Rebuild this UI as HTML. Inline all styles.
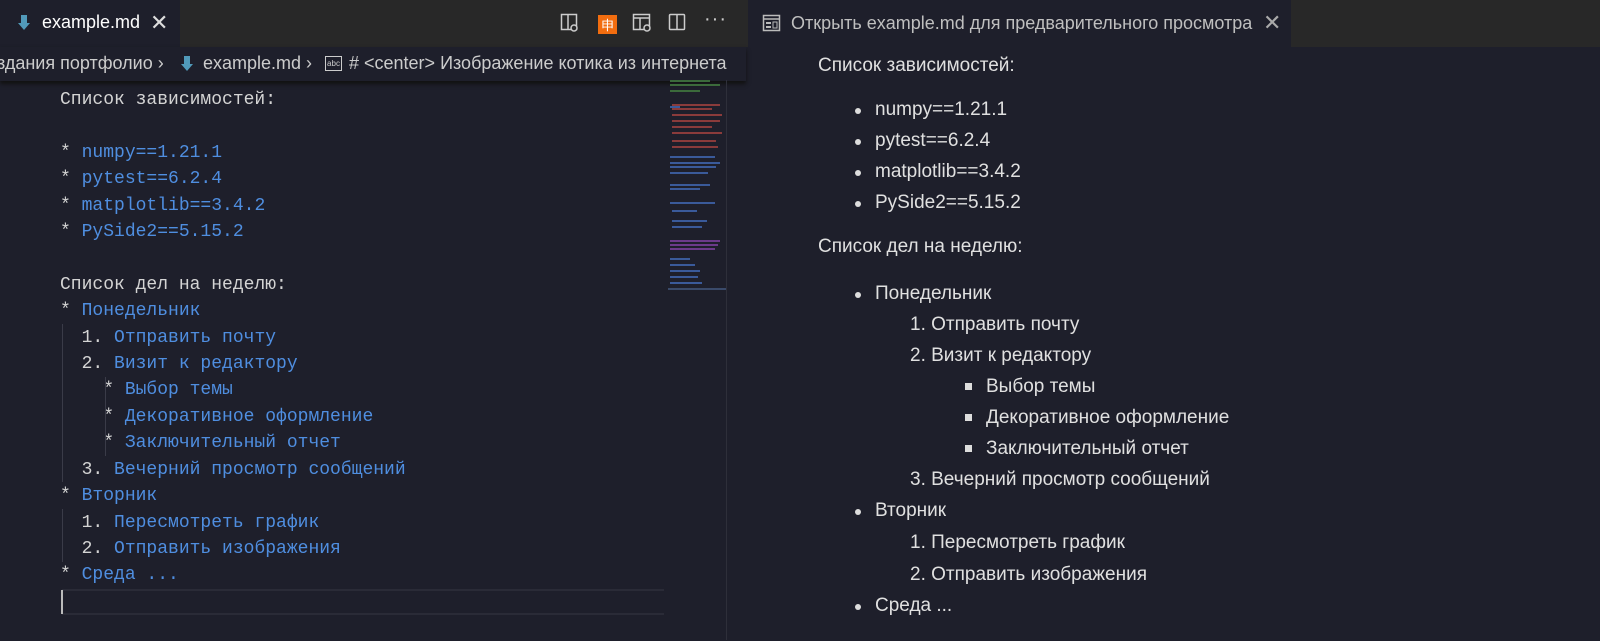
<!DOCTYPE html>
<html><head><meta charset="utf-8"><style>
body{margin:0;width:1600px;height:641px;background:#1e1f2b;overflow:hidden;position:relative;font-family:"Liberation Sans","Noto Sans CJK SC",sans-serif}
.abs{position:absolute}
.tabbar{left:0;top:0;width:1600px;height:47px;background:#282828}
.tab1{left:0;top:0;width:180px;height:47px;background:#1e1f2b}
.tab2{left:748px;top:0;width:543px;height:47px;background:#1e1f2b}
.sep{left:746px;top:47px;width:2px;height:594px;background:#2c2d38}
.code{font-family:"Liberation Mono",monospace;font-size:18px;color:#d4d4d4;white-space:pre;line-height:26.4px}
.b{color:#4f8ee0}
.pv{color:#e0e0e0;font-size:19px;white-space:pre}
.bul{width:6px;height:6px;border-radius:50%;background:#ddd}
.sq{width:7px;height:7px;background:#ddd}
.guide{width:1px;background:#3a3b48}
</style></head><body>
<div class="abs tabbar"></div>
<div class="abs tab1"></div>
<div class="abs tab2"></div>
<svg class="abs" style="left:17px;top:14px" width="14" height="18"><path d="M4 1h6v8h3l-6 7-6-7h3z" fill="#519aba"/></svg>
<div class="abs" style="left:42px;top:12px;color:#fff;font-size:18px">example.md</div>
<div class="abs" style="left:150px;top:10px;color:#ddd;font-size:22px">✕</div>
<svg class="abs" style="left:560px;top:12px" width="20" height="22"><rect x="1.5" y="2.5" width="15" height="15" fill="none" stroke="#ccc" stroke-width="1.5"/><line x1="8" y1="3" x2="8" y2="17" stroke="#ccc" stroke-width="1.5"/><circle cx="14" cy="16" r="3" fill="#282828" stroke="#ccc" stroke-width="1.5"/></svg>
<div class="abs" style="left:598px;top:15px;width:19px;height:19px;background:#f26d0f;color:#fff;font-size:13px;text-align:center;line-height:19px;font-family:'Noto Sans CJK SC',sans-serif">申</div>
<svg class="abs" style="left:632px;top:12px" width="22" height="22"><rect x="1.5" y="2.5" width="16" height="15" fill="none" stroke="#ccc" stroke-width="1.5"/><line x1="2" y1="6" x2="17" y2="6" stroke="#ccc" stroke-width="1.5"/><line x1="8" y1="6" x2="8" y2="17" stroke="#ccc" stroke-width="1.5"/><circle cx="15" cy="16" r="3" fill="#282828" stroke="#ccc" stroke-width="1.5"/></svg>
<svg class="abs" style="left:668px;top:12px" width="20" height="22"><rect x="1.5" y="2.5" width="15" height="15" rx="1" fill="none" stroke="#ccc" stroke-width="1.5"/><line x1="9" y1="3" x2="9" y2="17" stroke="#ccc" stroke-width="1.5"/></svg>
<div class="abs" style="left:704px;top:8px;color:#ccc;font-size:20px;letter-spacing:1px">···</div>
<svg class="abs" style="left:762px;top:14px" width="20" height="20"><rect x="1.5" y="1.5" width="16" height="15" fill="none" stroke="#bbb" stroke-width="1.5"/><line x1="2" y1="5" x2="17" y2="5" stroke="#bbb" stroke-width="1.5"/><rect x="4" y="8" width="5" height="2" fill="#bbb"/><rect x="4" y="12" width="5" height="2" fill="#bbb"/><rect x="11" y="8" width="4" height="6" fill="none" stroke="#bbb"/></svg>
<div class="abs" style="left:791px;top:13px;color:#bfbfbf;font-size:18px">Открыть example.md для предварительного просмотра</div>
<div class="abs" style="left:1263px;top:10px;color:#aaa;font-size:22px">✕</div>
<div class="abs" style="left:0;top:47px;width:746px;height:34px;box-shadow:0 3px 4px #111;background:#1e1f2b"></div>
<div class="abs" style="left:-3px;top:53px;color:#ccc;font-size:18px;white-space:pre">здания портфолио ›</div>
<svg class="abs" style="left:180px;top:55px" width="14" height="18"><path d="M4 1h6v8h3l-6 7-6-7h3z" fill="#519aba"/></svg>
<div class="abs" style="left:203px;top:53px;color:#ccc;font-size:18px;white-space:pre">example.md ›</div>
<div class="abs" style="left:325px;top:56px;width:15px;height:13px;border:1.5px solid #ccc;color:#ccc;font-size:8px;line-height:13px;text-align:center">abc</div>
<div class="abs" style="left:349px;top:53px;color:#ccc;font-size:18px;white-space:pre"># &lt;center&gt; Изображение котика из интернета</div>
<div class="abs" style="left:726px;top:80px;width:1px;height:560px;background:#2e2f3a"></div>
<svg class="abs" style="left:668px;top:80px" width="60" height="215">
<g fill="#3b6a3b"><rect x="2" y="0" width="40" height="2"/><rect x="2" y="4" width="50" height="2"/><rect x="2" y="10" width="30" height="2"/></g>
<g fill="#8a3b3b"><rect x="4" y="24" width="48" height="2"/><rect x="4" y="28" width="40" height="2"/><rect x="4" y="34" width="50" height="2"/><rect x="4" y="40" width="48" height="2"/><rect x="4" y="46" width="40" height="2"/><rect x="4" y="52" width="50" height="2"/><rect x="4" y="60" width="44" height="2"/><rect x="4" y="66" width="46" height="2"/></g>
<g fill="#3a5a9a"><rect x="2" y="26" width="10" height="2"/><rect x="2" y="76" width="45" height="2"/><rect x="2" y="82" width="50" height="2"/><rect x="2" y="86" width="46" height="2"/><rect x="2" y="92" width="38" height="2"/><rect x="2" y="104" width="40" height="2"/><rect x="2" y="108" width="30" height="2"/><rect x="2" y="122" width="45" height="2"/><rect x="4" y="130" width="25" height="2"/><rect x="4" y="140" width="35" height="2"/><rect x="4" y="146" width="30" height="2"/><rect x="2" y="178" width="20" height="2"/><rect x="2" y="184" width="25" height="2"/><rect x="2" y="190" width="30" height="2"/><rect x="2" y="196" width="28" height="2"/><rect x="2" y="202" width="32" height="2"/></g>
<g fill="#6b3a8a"><rect x="2" y="160" width="50" height="2"/><rect x="2" y="164" width="48" height="2"/><rect x="2" y="168" width="45" height="2"/></g>
<rect x="0" y="208" width="58" height="2" fill="#3a4a6a"/>
</svg>
<div class="abs code" style="left:60px;top:87px">Список зависимостей:

* <span class="b">numpy==1.21.1</span>
* <span class="b">pytest==6.2.4</span>
* <span class="b">matplotlib==3.4.2</span>
* <span class="b">PySide2==5.15.2</span>

Список дел на неделю:
* <span class="b">Понедельник</span>
  1. <span class="b">Отправить почту</span>
  2. <span class="b">Визит к редактору</span>
    * <span class="b">Выбор темы</span>
    * <span class="b">Декоративное оформление</span>
    * <span class="b">Заключительный отчет</span>
  3. <span class="b">Вечерний просмотр сообщений</span>
* <span class="b">Вторник</span>
  1. <span class="b">Пересмотреть график</span>
  2. <span class="b">Отправить изображения</span>
* <span class="b">Среда ...</span></div>
<div class="abs guide" style="left:62px;top:324px;height:158px"></div>
<div class="abs guide" style="left:105px;top:377px;height:79px"></div>
<div class="abs guide" style="left:62px;top:509px;height:53px"></div>
<div class="abs" style="left:62px;top:589px;width:602px;height:26px;border-top:2px solid #2a2b37;border-bottom:2px solid #2a2b37;box-sizing:border-box"></div>
<div class="abs" style="left:61px;top:590px;width:2px;height:24px;background:#bbb"></div>
<div class="abs pv" style="left:818px;top:55px">Список зависимостей:</div>
<div class="abs bul" style="left:855px;top:108px"></div><div class="abs pv" style="left:875px;top:99px">numpy==1.21.1</div>
<div class="abs bul" style="left:855px;top:139px"></div><div class="abs pv" style="left:875px;top:130px">pytest==6.2.4</div>
<div class="abs bul" style="left:855px;top:170px"></div><div class="abs pv" style="left:875px;top:161px">matplotlib==3.4.2</div>
<div class="abs bul" style="left:855px;top:201px"></div><div class="abs pv" style="left:875px;top:192px">PySide2==5.15.2</div>
<div class="abs pv" style="left:818px;top:236px">Список дел на неделю:</div>
<div class="abs bul" style="left:855px;top:292px"></div><div class="abs pv" style="left:875px;top:283px">Понедельник</div>
<div class="abs pv" style="left:910px;top:314px">1. Отправить почту</div>
<div class="abs pv" style="left:910px;top:345px">2. Визит к редактору</div>
<div class="abs sq" style="left:965px;top:383px"></div><div class="abs pv" style="left:986px;top:376px">Выбор темы</div>
<div class="abs sq" style="left:965px;top:414px"></div><div class="abs pv" style="left:986px;top:407px">Декоративное оформление</div>
<div class="abs sq" style="left:965px;top:445px"></div><div class="abs pv" style="left:986px;top:438px">Заключительный отчет</div>
<div class="abs pv" style="left:910px;top:469px">3. Вечерний просмотр сообщений</div>
<div class="abs bul" style="left:855px;top:509px"></div><div class="abs pv" style="left:875px;top:500px">Вторник</div>
<div class="abs pv" style="left:910px;top:532px">1. Пересмотреть график</div>
<div class="abs pv" style="left:910px;top:564px">2. Отправить изображения</div>
<div class="abs bul" style="left:855px;top:604px"></div><div class="abs pv" style="left:875px;top:595px">Среда ...</div>
</body></html>
